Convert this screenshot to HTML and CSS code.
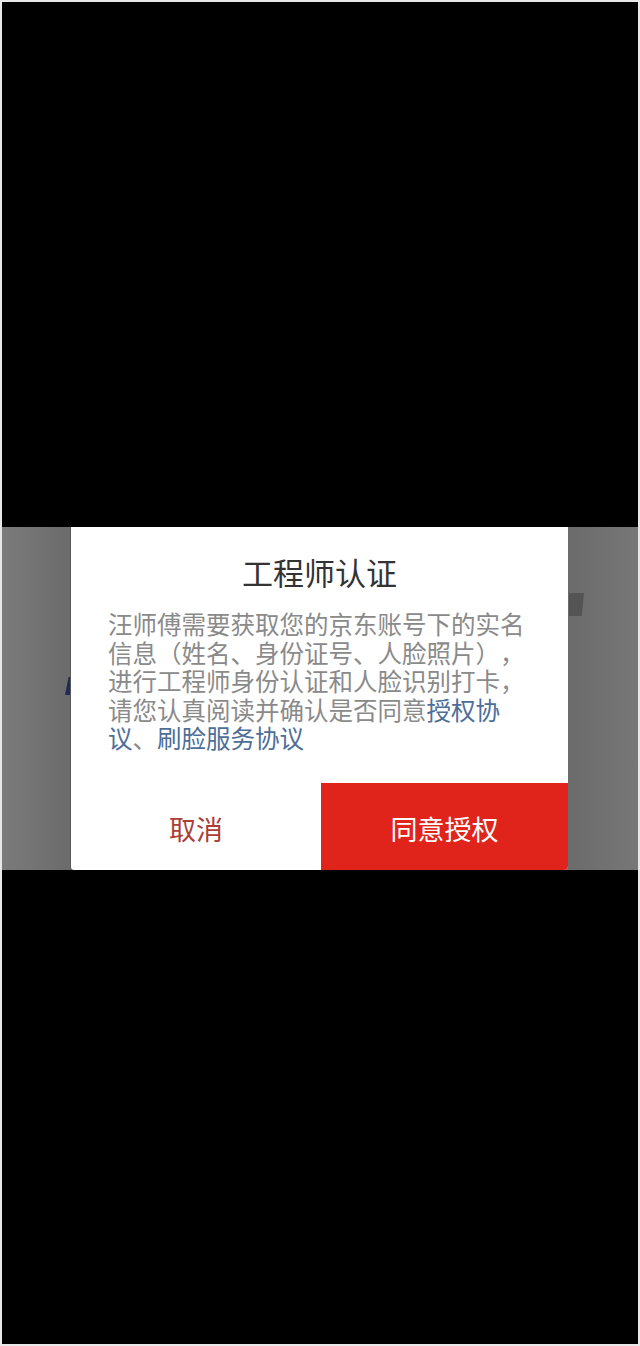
FILE: index.html
```html
<!DOCTYPE html>
<html lang="zh-CN">
<head>
<meta charset="utf-8">
<title>工程师认证</title>
<link rel="stylesheet" href="styles.css">
</head>
<body>
<div class="screen">
  <div class="band">
    <span class="ghost ghost-left"></span>
    <span class="ghost ghost-right"></span>
    <div class="dialog">
      <h1 class="title">工程师认证</h1>
      <div class="message">
        <div class="line">汪师傅需要获取您的京东账号下的实名</div>
        <div class="line">信息（姓名、身份证号、人脸照片），</div>
        <div class="line">进行工程师身份认证和人脸识别打卡，</div>
        <div class="line">请您认真阅读并确认是否同意<span class="link">授权协</span></div>
        <div class="line"><span class="link">议</span>、<span class="link">刷脸服务协议</span></div>
      </div>
      <div class="actions">
        <div class="btn btn-cancel">取消</div>
        <div class="btn btn-agree">同意授权</div>
      </div>
    </div>
  </div>
</div>
</body>
</html>
```
FILE: styles.css
```css
html, body {
  margin: 0;
  padding: 0;
}
body {
  background: #e8e8e8;
  font-family: "Noto Sans CJK SC", "Noto Sans", sans-serif;
}
.screen {
  margin: 2px 2px 2px 2px;
  height: 1342px;
  background: #000;
  padding-top: 525px;
  box-sizing: border-box;
}
.band {
  position: relative;
  height: 343px;
  padding-left: 69px;
  background: linear-gradient(to right, #7b7b7b 0%, #6c6c6c 10%, #676767 50%, #6c6c6c 90%, #777 100%);
}
.ghost {
  position: absolute;
  display: block;
}
.ghost-left {
  left: 63px;
  top: 150px;
  width: 6px;
  height: 18px;
  background: #1f2c55;
  clip-path: polygon(60% 0, 100% 0, 100% 100%, 0 100%);
}
.ghost-right {
  left: 567px;
  top: 66px;
  width: 15px;
  height: 23px;
  background: #545454;
  clip-path: polygon(0 0, 100% 0, 85% 100%, 0 100%);
}
.dialog {
  position: relative;
  width: 497px;
  height: 343px;
  background: #fff;
  display: flex;
  flex-direction: column;
  border-radius: 0 0 4px 4px;
  overflow: hidden;
  box-shadow: -1px 0 0 #5a5a5a;
}
.title {
  margin: 25px 0 0 0;
  font-size: 31px;
  line-height: 40px;
  font-weight: 400;
  color: #333;
  text-align: center;
}
.message {
  margin: 20px 0 0 0;
  padding-left: 37px;
  font-family: "Liberation Sans", "Noto Sans CJK SC", sans-serif;
  font-size: 24.5px;
  color: #8a8a8a;
  white-space: nowrap;
  text-spacing-trim: space-all;
}
.line {
  height: 28.5px;
  line-height: 28.5px;
}
.link {
  color: #4d6e98;
}
.actions {
  margin-top: auto;
  height: 87px;
  display: flex;
}
.btn {
  height: 87px;
  line-height: 87px;
  padding-top: 2px;
  box-sizing: border-box;
  text-align: center;
  font-size: 27px;
}
.btn-cancel {
  width: 250px;
  color: #ab3c37;
  background: #fff;
}
.btn-agree {
  flex: 1;
  color: #fff;
  background: #e0241b;
}
```
